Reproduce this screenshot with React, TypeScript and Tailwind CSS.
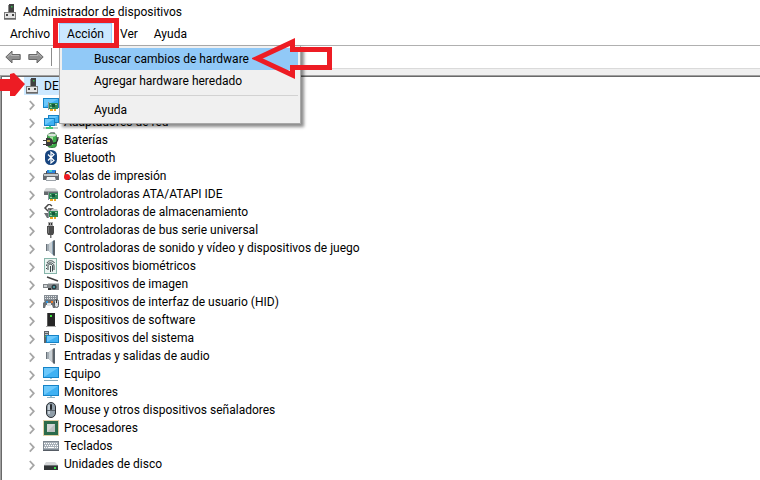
import type { ReactNode } from 'react';

type Device = { label: string; icon: ReactNode };

function Icon({ children }: { children: ReactNode }) {
  return (
    <svg viewBox="0 0 16 16" className="h-4 w-4 shrink-0" aria-hidden="true">
      {children}
    </svg>
  );
}

function Screen({ x, y, w, h }: { x: number; y: number; w: number; h: number }) {
  return (
    <>
      <rect x={x} y={y} width={w} height={h} fill="#1583c7" />
      <rect x={x + 1} y={y + 1} width={w - 2} height={h - 2} fill="#3fb1f3" />
      <path d={`M${x + 1} ${y + 1}h${w - 2}L${x + 1} ${y + h - 1}z`} fill="#6cc8fb" />
    </>
  );
}

function Card({ x, y }: { x: number; y: number }) {
  return (
    <>
      <rect x={x} y={y} width="9" height="6" fill="#2f8a57" />
      <path d={`M${x - 1} ${y - 1}h1v8h-1z`} fill="#8d969c" />
      <path d={`M${x + 1} ${y + 1}h1v1h-1zM${x + 6} ${y + 1}h2v1h-2zM${x + 1} ${y + 4}h2v1h-2z`} fill="#9fd0a8" />
      <rect x={x + 3} y={y + 1} width="3" height="3" fill="#17573a" />
      <path d={`M${x + 1} ${y + 6}h3v2h-3zM${x + 5} ${y + 6}h2v2h-2z`} fill="#e9a623" />
    </>
  );
}

function DeviceManagerIcon() {
  return (
    <Icon>
      <path d="M7 0h5v8H7z" fill="#414141" />
      <path d="M6 1h1v7H6z" fill="#8a8a8a" />
      <rect x="9" y="2" width="1.500" height="1.500" fill="#35b34a" />
      <path d="M2 8h12v7.500H2z" fill="#7d7d7d" />
      <path d="M3 9h10v5.500H3z" fill="#e4e4e4" />
      <path d="M4 10h2v2H4zM10 10h2v2h-2z" fill="#444" />
      <path d="M2 14h12v1.500H2z" fill="#686868" />
    </Icon>
  );
}

function SpeakerIcon({ tone }: { tone: string }) {
  return (
    <Icon>
      <path d="M3 4h4v7H3z" fill="#69727a" />
      <path d="M4 4h2v7H4z" fill="#a4adb4" />
      <path d="M6 4l5-4v16l-5-5z" fill={tone} />
      <path d="M6 4l3-2.500v12L6 11z" fill="#c9d0d5" />
      <path d="M10 1l2-1v16l-2-1z" fill="#59626a" />
    </Icon>
  );
}

const devices: Device[] = [
  {
    label: '',
    icon: (
      <Icon>
        <Screen x={0} y={2} w={16} h={10} />
        <Card x={6} y={7} />
      </Icon>
    ),
  },
  {
    label: 'Adaptadores de red',
    icon: (
      <Icon>
        <Screen x={5} y={1} w={11} h={8} />
        <Screen x={1} y={4} w={11} h={8} />
        <path d="M12 9h2v3h-2z" fill="#8fb7c9" />
        <path d="M0 13h15v2H0z" fill="#c3cfca" />
        <path d="M3 13h7v2H3zM6 12h2v1H6z" fill="#43c777" />
      </Icon>
    ),
  },
  {
    label: 'Baterías',
    icon: (
      <Icon>
        <rect x="7" y="0" width="5" height="3" rx="1" fill="#8b9092" />
        <rect x="4.500" y="1.500" width="9" height="14" rx="3" fill="#3cae4a" stroke="#397a40" />
        <ellipse cx="9" cy="3" rx="4" ry="1.500" fill="#dbe4db" />
        <path d="M7 5h3v8H7z" fill="#a6e79c" />
        <path d="M9 11c4 1 6-1 6-6" fill="none" stroke="#2b2b2b" strokeWidth="1.300" />
        <path d="M3 6h3c3 0 4 2 4 4s-1 4-4 4H3z" fill="#3a3a3a" />
        <path d="M4 8h3v2H4z" fill="#c1a74d" />
        <path d="M0 8h3v1H0zM0 12h3v1H0z" fill="#444" />
      </Icon>
    ),
  },
  {
    label: 'Bluetooth',
    icon: (
      <Icon>
        <rect x="2" y="0" width="12" height="15" rx="5.500" fill="#17457f" />
        <path d="M5 4.500l6 6L8 13V2l3 2.500-6 6" fill="none" stroke="#fff" strokeWidth="1.200" />
      </Icon>
    ),
  },
  {
    label: 'Colas de impresión',
    icon: (
      <Icon>
        <path d="M4 2h9v4H4z" fill="#2c86e0" />
        <path d="M6 2h3v2H6z" fill="#48cfc4" />
        <path d="M1 5h14l1 2v5H0V7z" fill="#646a70" />
        <path d="M1 6h14v2H1z" fill="#c3c8cb" />
        <path d="M3 3h1v3H3zM12 3h1v3h-1z" fill="#4a5057" />
        <path d="M4 9h8l1 4H3z" fill="#f3f5f6" />
        <path d="M3 13h10v-1H3z" fill="#9aa1a7" />
      </Icon>
    ),
  },
  {
    label: 'Controladoras ATA/ATAPI IDE',
    icon: (
      <Icon>
        <path d="M3 2h9l3 3H1z" fill="#d3d5d6" />
        <path d="M1 5h14v4H1z" fill="#666b6f" />
        <path d="M1 5h14v1H1z" fill="#9a9ea1" />
        <Card x={6} y={7} />
      </Icon>
    ),
  },
  {
    label: 'Controladoras de almacenamiento',
    icon: (
      <Icon>
        <path d="M6 0L2 4l4 4 3-3H5M6 0l3 2" fill="none" stroke="#484848" strokeWidth="1.500" />
        <path d="M1 9h5v5H4z" fill="#6b7074" />
        <path d="M7 7l2-2h5l1 2z" fill="#c4c7ca" />
        <Card x={6} y={7} />
      </Icon>
    ),
  },
  {
    label: 'Controladoras de bus serie universal',
    icon: (
      <Icon>
        <path d="M5 0h5v5H5z" fill="#a8a8a8" />
        <path d="M6 1h1v2H6zM8 1h1v2H8z" fill="#333" />
        <path d="M4 4h7v7l-1 2H5l-1-2z" fill="#4b4b4b" />
        <path d="M5 5h1v6H5z" fill="#7b7b7b" />
        <path d="M7 13h1.500v3H7z" fill="#777" />
      </Icon>
    ),
  },
  { label: 'Controladoras de sonido y vídeo y dispositivos de juego', icon: <SpeakerIcon tone="#8ba3b5" /> },
  {
    label: 'Dispositivos biométricos',
    icon: (
      <Icon>
        <rect x="1.500" y=".5" width="12" height="15" fill="#eaf4f1" stroke="#86b5aa" />
        <g fill="none" stroke="#3c4448">
          <path d="M4 5c1-3 6-3 7.500 0M3.500 8c0-4 7.500-4.500 7.500 0v4" />
          <path d="M5 12V8c0-2.500 4.500-2.500 4.500 0v5.500M7.500 8v6" />
          <path d="M3.500 10v1" />
        </g>
      </Icon>
    ),
  },
  {
    label: 'Dispositivos de imagen',
    icon: (
      <Icon>
        <path d="M4 1l11 4" stroke="#404040" strokeWidth="1.500" />
        <path d="M0 8h5v4H0z" fill="#7d8286" />
        <path d="M1 9h3v2H1z" fill="#cfd3d5" />
        <path d="M5 7h11v7H5z" fill="#85898c" />
        <path d="M5 7h11v1H5z" fill="#c2c5c7" />
        <circle cx="11" cy="11" r="2.500" fill="#2b3a40" />
        <circle cx="11" cy="11" r="1" fill="#4fb3bb" />
        <path d="M5 12h3v2H5z" fill="#333" />
      </Icon>
    ),
  },
  {
    label: 'Dispositivos de interfaz de usuario (HID)',
    icon: (
      <Icon>
        <path d="M1 1h14v6H1z" fill="#868d94" />
        <path d="M2 2.500h12M2 4.500h12" stroke="#e5e8ea" strokeDasharray="1 1" />
        <path d="M3 6h7l2 3v5h-2l-1-3H3l-1 3H0V9z" fill="#6b7075" />
        <path d="M3 7h2v2H3z" fill="#2b92dd" />
        <path d="M8 7h2v2H8z" fill="#ee7c2b" />
        <path d="M4 9h4v3H4z" fill="#dfe3e6" />
        <rect x="11.500" y="5.500" width="4" height="8" rx="2" fill="#d8dcdf" stroke="#52585d" />
        <path d="M13 6h1v3h-1z" fill="#333" />
      </Icon>
    ),
  },
  {
    label: 'Dispositivos de software',
    icon: (
      <Icon>
        <path d="M4 1h8v13H4z" fill="#262626" />
        <path d="M4 1h1v13H4z" fill="#5c5c5c" />
        <rect x="7" y="3" width="2" height="2" fill="#3be03b" />
        <path d="M3 14h10v1H3z" fill="#a9a9a9" />
      </Icon>
    ),
  },
  {
    label: 'Dispositivos del sistema',
    icon: (
      <Icon>
        <path d="M1 1h5v12H1z" fill="#5d6468" />
        <path d="M2 2h3v1H2zM2 4h3v1H2z" fill="#b9bfc3" />
        <rect x="2" y="6" width="1" height="1" fill="#43d04a" />
        <Screen x={3} y={5} w={13} h={8} />
        <path d="M7 14h6v1H7z" fill="#8b9aa5" />
      </Icon>
    ),
  },
  { label: 'Entradas y salidas de audio', icon: <SpeakerIcon tone="#989a9c" /> },
  {
    label: 'Equipo',
    icon: (
      <Icon>
        <Screen x={0} y={1} w={16} h={11} />
        <path d="M7 12h2v1H7z" fill="#9cc6d8" />
        <path d="M1 14h14v1H1z" fill="#86a8b8" />
      </Icon>
    ),
  },
  {
    label: 'Monitores',
    icon: (
      <Icon>
        <Screen x={0} y={1} w={16} h={11} />
        <path d="M7 12h2v1H7z" fill="#9cc6d8" />
        <path d="M4 13h8v1H4z" fill="#8fb3c4" />
      </Icon>
    ),
  },
  {
    label: 'Mouse y otros dispositivos señaladores',
    icon: (
      <Icon>
        <rect x="3.500" y=".5" width="9" height="15" rx="4.500" fill="#8f9da8" stroke="#2c3035" />
        <path d="M5 3h2v9H5z" fill="#c4ced6" />
        <rect x="7" y="2" width="2" height="6" rx="1" fill="#24282c" />
        <path d="M4 8.500h8" stroke="#59636b" />
      </Icon>
    ),
  },
  {
    label: 'Procesadores',
    icon: (
      <Icon>
        <rect x=".5" y=".5" width="15" height="15" fill="none" stroke="#c2a24a" strokeDasharray="1 1" />
        <rect x="1" y="1" width="14" height="14" fill="#2c6b4a" />
        <rect x="4" y="4" width="8" height="8" fill="#d2d6d4" />
        <path d="M4 12l8-8v8z" fill="#bcc1bf" />
      </Icon>
    ),
  },
  {
    label: 'Teclados',
    icon: (
      <Icon>
        <path d="M0 3h16v10H0z" fill="#7f8891" />
        <path d="M1 4h14v7H1z" fill="#a9b1b9" />
        <path d="M1 5.500h14M2 7.500h13M1 9.500h3M12 9.500h3" stroke="#fff" strokeDasharray="1 1" />
        <path d="M5 9h6v1H5z" fill="#fff" />
        <path d="M0 12h16v1H0z" fill="#555c64" />
      </Icon>
    ),
  },
  {
    label: 'Unidades de disco',
    icon: (
      <Icon>
        <path d="M3 6h9l3 3H1z" fill="#d4d6d8" />
        <path d="M1 9h14v5H1z" fill="#303335" />
        <path d="M1 9h14v1H1z" fill="#6d7174" />
        <rect x="11" y="11" width="2" height="2" fill="#3ee04d" />
      </Icon>
    ),
  },
];

function ToolbarArrow({ flip = false }: { flip?: boolean }) {
  return (
    <svg viewBox="0 0 16 14" className={flip ? 'h-3.5 w-4 -scale-x-100' : 'h-3.5 w-4'} aria-hidden="true">
      <path d="M.8 7L7 1v3.500h8.200v5H7V13z" fill="#8f8f8f" stroke="#686868" />
      <path d="M2.500 7L6 3.500v2h8" fill="none" stroke="#b5b5b5" />
    </svg>
  );
}

function ActionMenu() {
  return (
    <div
      role="menu"
      className="absolute left-0 top-full z-10 w-[242px] border border-[#a8a8a8] bg-[#f0f0f0] p-0.5 shadow-[3px_3px_3px_rgba(0,0,0,0.45)]"
    >
      <button type="button" role="menuitem" className="block h-[22px] w-full bg-[#91c9f7] pl-8 text-left">
        Buscar cambios de hardware
      </button>
      <button type="button" role="menuitem" className="block h-[22px] w-full pl-8 text-left">
        Agregar hardware heredado
      </button>
      <hr className="my-[3px] ml-7 border-[#d2d2d2]" />
      <button type="button" role="menuitem" className="block h-[22px] w-full pl-8 text-left">
        Ayuda
      </button>
      {/* Arrow pointing at the highlighted entry */}
      <svg viewBox="0 0 82 43" className="pointer-events-none absolute -top-2 left-[192px] h-[43px] w-[82px]" aria-hidden="true">
        <path d="M5 20.500L40.500 4v7.500h37v18h-37V37z" fill="none" stroke="#ed1c24" strokeWidth="5" />
      </svg>
    </div>
  );
}

function TreeRow({ device, marked }: { device: Device; marked: boolean }) {
  return (
    <li role="treeitem" className="relative flex h-[18px] items-center">
      <button type="button" aria-label={`Expandir ${device.label}`} className="flex h-full w-4 pl-0.5">
        <svg viewBox="0 0 6 18" className="h-[18px] w-1.5" aria-hidden="true">
          <path d="M.8 6l4 4.300-4 4.300" fill="none" stroke="#a6a6a6" strokeWidth="1.800" />
        </svg>
      </button>
      <span className="flex items-center gap-[5px]">
        {device.icon}
        {device.label}
      </span>
      {marked && <span className="absolute left-[37px] top-[7px] h-1.5 w-1.5 rounded-full bg-[#ed1c24]" />}
    </li>
  );
}

function App() {
  return (
    <div className="flex min-h-screen flex-col bg-white font-['Roboto','Open_Sans',sans-serif] text-[12px] leading-[18px] text-black">
      <header className="flex h-[23px] items-center gap-[5px] pl-0.5">
        <DeviceManagerIcon />
        <h1>Administrador de dispositivos</h1>
      </header>

      <nav className="flex h-[23px] border-b border-[#b0b0b0]">
        <button type="button" className="w-[59px] pl-[10px] text-left">
          Archivo
        </button>
        <div className="relative w-[53px]">
          <button type="button" aria-expanded="true" className="h-full w-full border border-[#99d1ff] bg-[#cce8ff]">
            Acción
          </button>
          <ActionMenu />
          <span className="pointer-events-none absolute -bottom-[3px] -left-1.5 -right-[7px] -top-[5px] z-20 border-5 border-[#ed1c24]" />
        </div>
        <button type="button" className="pl-2">
          Ver
        </button>
        <button type="button" className="pl-4">
          Ayuda
        </button>
      </nav>

      <div className="flex h-[23px] items-center gap-[7px] border-b border-[#dadada] pl-[5px]">
        <button type="button" aria-label="Atrás">
          <ToolbarArrow />
        </button>
        <button type="button" aria-label="Adelante">
          <ToolbarArrow flip />
        </button>
        <span className="h-[18px] w-px bg-[#8c8c8c]" />
      </div>

      <main className="flex flex-1 flex-col bg-[#f0f0f0] pt-1.5">
        <div className="flex-1 border-l border-t border-[#a0a0a0]">
          <div className="h-full min-h-[404px] border-l border-t border-[#696969] bg-white">
            <div className="relative flex h-[18px] items-center pl-[22px]">
              <div className="flex h-full w-52 items-center gap-1 bg-[#cce8ff]">
                <DeviceManagerIcon />
                DE
              </div>
              <svg viewBox="0 0 27 24" className="pointer-events-none absolute -left-0.5 -top-1 h-6 w-[27px]" aria-hidden="true">
                <path d="M0 6h10V1l4-1 11 11-10 12h-5v-5H0z" fill="#ed1c24" />
              </svg>
            </div>
            <ul role="tree" className="pl-[25px]">
              {devices.map((device) => (
                <TreeRow key={device.label} device={device} marked={device.label === 'Colas de impresión'} />
              ))}
            </ul>
          </div>
        </div>
      </main>
    </div>
  );
}

export default App;
